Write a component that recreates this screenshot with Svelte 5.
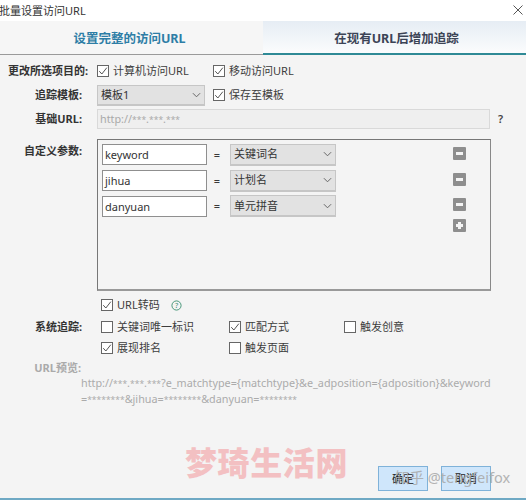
<script>
  const params = [
    { key: 'keyword', value: '关键词名' },
    { key: 'jihua', value: '计划名' },
    { key: 'danyuan', value: '单元拼音' }
  ];
</script>

{#snippet box(checked)}
  <span class="box">
    {#if checked}
      <svg viewBox="0 0 12 12" width="10" height="10"><path d="M1.5 6.2 4.6 9.6 10.6 2" fill="none" stroke="#444" stroke-width="1.1" /></svg>
    {/if}
  </span>
{/snippet}

{#snippet chev()}
  <svg class="chev" viewBox="0 0 10 6" width="9" height="6"><path d="M1 1 5 5 9 1" fill="none" stroke="#666" stroke-width="1.1" /></svg>
{/snippet}

<div class="win">
  <header class="title">
    <span>批量设置访问URL</span>
    <svg viewBox="0 0 10 10" width="10" height="10"><path d="M.5.5l9 9M9.5.5l-9 9" stroke="#444" stroke-width="0.9" fill="none" /></svg>
  </header>

  <nav class="tabs">
    <div class="tab on">设置完整的访问URL</div>
    <div class="tab off">在现有URL后增加追踪</div>
  </nav>

  <main class="form">
    <div class="row r1">
      <div class="lab wide">更改所选项目的:</div>
      <label class="chk c1">{@render box(true)}计算机访问URL</label>
      <label class="chk">{@render box(true)}移动访问URL</label>
    </div>
    <div class="row r2">
      <div class="lab">追踪模板:</div>
      <div class="sel tpl">模板1{@render chev()}</div>
      <label class="chk">{@render box(true)}保存至模板</label>
    </div>
    <div class="row r3">
      <div class="lab">基础URL:</div>
      <div class="base">http://<span class="s">***</span>.<span class="s">***</span>.<span class="s">***</span></div>
      <span class="q">?</span>
    </div>
    <div class="row r4">
      <div class="lab">自定义参数:</div>
      <div class="params">
        {#each params as p}
          <div class="param">
            <div class="inp">{p.key}</div>
            <span class="eq">=</span>
            <div class="sel val">{p.value}{@render chev()}</div>
            <span class="ico"><i class="h"></i></span>
          </div>
        {/each}
        <div class="addrow"><span class="ico"><i class="h"></i><i class="v"></i></span></div>
      </div>
    </div>
    <div class="row r5">
      <label class="chk">{@render box(true)}URL转码</label>
      <svg class="help" viewBox="0 0 12 12" width="11" height="11"><circle cx="6" cy="6" r="5" fill="none" stroke="#3a8f70" stroke-width="1" /><text x="6" y="9" text-anchor="middle" font-size="8" fill="#3a8f70">?</text></svg>
    </div>
    <div class="row r6">
      <div class="lab">系统追踪:</div>
      <div class="sys">
        <label class="chk">{@render box(false)}关键词唯一标识</label>
        <label class="chk">{@render box(true)}匹配方式</label>
        <label class="chk">{@render box(false)}触发创意</label>
        <label class="chk">{@render box(true)}展现排名</label>
        <label class="chk">{@render box(false)}触发页面</label>
      </div>
    </div>
    <div class="row r7">
      <div class="lab grey">URL预览:</div>
    </div>
    <p class="preview">http://<span class="s">***</span>.<span class="s">***</span>.<span class="s">***</span>?e_matchtype={'{'}matchtype{'}'}&amp;e_adposition={'{'}adposition{'}'}&amp;keyword<br />=<span class="s">********</span>&amp;jihua=<span class="s">********</span>&amp;danyuan=<span class="s">********</span></p>
    <footer class="foot">
      <button>确定</button>
      <button>取消</button>
    </footer>
  </main>

  <div class="wm">梦琦生活网</div>
  <div class="zh">知乎 @tengfeifox</div>
</div>

<style>
  :global(body) { margin: 0; background: #f4f4f4; }
  .win {
    position: relative; width: 526px; height: 500px; overflow: hidden; box-sizing: border-box;
    background: #f4f4f4; border-bottom: 2px solid #6fa9c4;
    font: 11px/16px "Noto Sans", "Noto Sans CJK SC", sans-serif; color: #3a3a3a;
  }
  .title {
    height: 21px; background: #fff; display: flex; align-items: center; justify-content: space-between;
    padding: 0 3px 0 0; font-size: 11px; color: #333; margin-left: -1px;
  }
  .title svg { margin-bottom: 2px; }
  .tabs { display: flex; height: 34px; box-sizing: border-box; }
  .tab { width: 50%; height: 34px; text-align: center; font-size: 12.5px; font-weight: 700; line-height: 36px; box-sizing: border-box; overflow: hidden; }
  .on { color: #2e7ea6; background: #f6f6f6; border-bottom: 1px solid #9a9a9a; padding-right: 4px; }
  .off { color: #3c4456; background: linear-gradient(#e6edf4, #fbfcfd); border-bottom: 2px solid #2f8a96; padding-left: 4px; }
  .form { display: flex; flex-direction: column; }
  .row { display: flex; align-items: center; }
  .lab { width: 82px; margin-right: 15px; text-align: right; font-weight: 700; color: #333; white-space: nowrap; font-size: 11px; flex: none; }
  .wide { width: 88px; margin-right: 9px; }
  .grey { color: #aaa; width: 81px; margin-right: 0; }
  .chk { display: inline-flex; align-items: center; gap: 4px; white-space: nowrap; color: #3d3d3d; font-size: 11px; }
  .box {
    width: 12px; height: 12px; box-sizing: border-box; border: 1px solid #666; background: #fff; display: flex;
    align-items: center; justify-content: center; flex: none;
  }
  .r1 { height: 20px; margin-top: 6px; }
  .c1 { width: 116px; }
  .r2 { height: 22px; margin-top: 3px; }
  .sel {
    display: flex; align-items: center; justify-content: space-between; box-sizing: border-box;
    background: #e2e2e2; border: 1px solid #c6c6c6; border-bottom-width: 2px; padding: 0 3px; color: #333;
    font-size: 11px; flex: none;
  }
  .tpl { width: 108px; height: 21px; margin-right: 8px; }
  .r3 { height: 21px; margin-top: 2px; }
  .base {
    width: 393px; height: 20px; box-sizing: border-box; border: 1px solid #d9d9d9; background: #efefef;
    color: #a9a9a9; padding: 0 2px; line-height: 18px; font-size: 10.8px; flex: none;
  }
  .s { font-size: 8.5px; }
  .q { margin-left: 8px; font-size: 11px; font-weight: 600; color: #444; }
  .r4 { align-items: flex-start; margin-top: 10px; }
  .r4 .lab { margin-top: 4px; }
  .params {
    width: 394px; height: 152px; box-sizing: border-box; border: 1px solid #777; border-bottom: 2px solid #999;
    border-right-color: #888; padding: 4px 0 0 4px; display: flex; flex-direction: column; gap: 4.3px;
  }
  .param { display: flex; align-items: center; height: 21.5px; }
  .inp {
    width: 105px; height: 21px; box-sizing: border-box; background: #fff; border: 1px solid #8f8f8f;
    padding: 0 2px; line-height: 19px; font-size: 11px; color: #333; flex: none;
  }
  .eq { width: 23px; box-sizing: border-box; padding-right: 3px; text-align: center; flex: none; }
  .val { width: 106px; height: 22px; }
  .ico {
    position: relative; display: block; width: 13px; height: 13px; background: #8e8e8e; border-radius: 1px;
    margin: 0 0 3px 117px; flex: none;
  }
  .addrow { padding-left: 351px; margin-top: -2px; }
  .addrow .ico { margin-left: 0; }
  .ico i { position: absolute; background: #f4f4f4; }
  .h { left: 3px; top: 5px; width: 7px; height: 3px; }
  .v { left: 5px; top: 3px; width: 3px; height: 7px; }
  .r5 { margin: 7px 0 0 101px; height: 14px; gap: 11px; }
  .help { flex: none; }
  .r6 { align-items: flex-start; margin-top: 7px; }
  .r6 .lab { margin-right: 19px; }
  .sys { display: grid; grid-template-columns: 128px 115px auto; row-gap: 5px; }
  .sys .chk { height: 16px; }
  .r7 { margin-top: 4px; height: 16px; }
  .preview {
    margin: -1px 0 0 81px; font-size: 10.8px; line-height: 15px; color: #ababab; white-space: nowrap;
  }
  .foot { display: flex; justify-content: flex-end; gap: 13px; padding-right: 35px; margin-top: 59px; }
  button {
    width: 50px; height: 25px; box-sizing: border-box; padding: 0; border: 1px solid #7fb2d9; background: #cfe6fb;
    font: inherit; font-size: 11px; color: #222;
  }
  .wm {
    position: absolute; left: 185px; top: 442px; font-size: 32px; line-height: 42px; font-weight: 900;
    color: #f3c0c2; letter-spacing: 0.6px; white-space: nowrap;
  }
  .zh { position: absolute; left: 395px; top: 468px; font-size: 14.5px; line-height: 18px; color: #a8a8a8; opacity: 0.85; white-space: nowrap; }
</style>
